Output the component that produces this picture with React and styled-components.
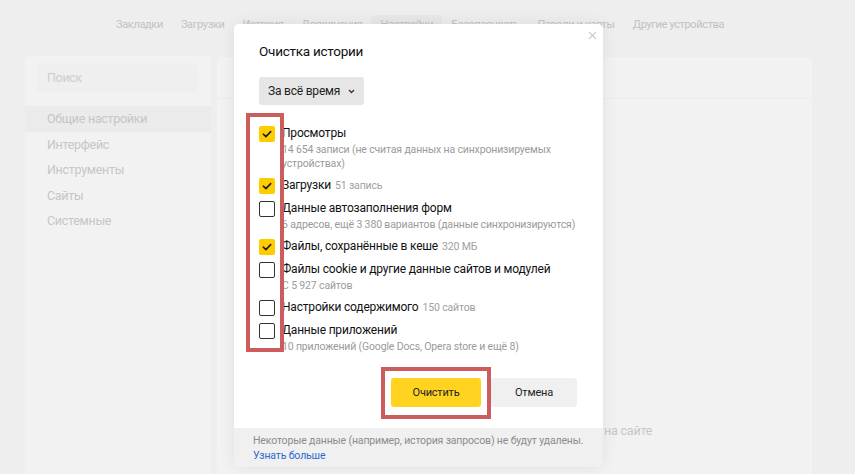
import React from "react";
import styled, { createGlobalStyle } from "styled-components";

const GlobalStyle = createGlobalStyle`
  html, body {
    margin: 0;
    padding: 0;
    width: 855px;
    height: 474px;
    overflow: hidden;
    background: #eeeeee;
    font-family: Roboto, "Open Sans", "Liberation Sans", sans-serif;
  }
  * { box-sizing: border-box; }
`;

const Page = styled.div`
  position: relative;
  width: 855px;
  height: 474px;
  overflow: hidden;
  display: flex;
  flex-direction: column;
`;

/* ---------- settings page behind the dialog ---------- */

const Nav = styled.nav`
  display: flex;
  padding: 15px 0 0 107px;
`;

const NavItem = styled.span`
  height: 20px;
  line-height: 20px;
  padding: 0 9px;
  border-radius: 4px;
  font-size: 11px;
  letter-spacing: -0.35px;
  color: #c2c2c2;
  white-space: nowrap;
  background: ${(p) => (p.$active ? "#e8e8e8" : "transparent")};
`;

const Body = styled.div`
  flex: 1;
  display: flex;
  gap: 6px;
  padding: 21px 43px 0 25px;
`;

const Sidebar = styled.aside`
  width: 186px;
  background: #f2f2f2;
  border-radius: 5px 5px 0 0;
  padding-top: 7px;
`;

const Search = styled.div`
  margin: 0 13px 0 12px;
  height: 29px;
  border-radius: 3px;
  background: #efefef;
  padding-left: 10px;
  line-height: 29px;
  font-size: 12.5px;
  letter-spacing: -0.3px;
  color: #cdcdcd;
`;

const SideList = styled.div`
  margin-top: 14px;
  display: flex;
  flex-direction: column;
`;

const SideItem = styled.div`
  height: 25.5px;
  line-height: 25.5px;
  padding-left: 22px;
  font-size: 12.5px;
  letter-spacing: -0.3px;
  color: #c6c6c6;
  background: ${(p) => (p.$active ? "#ebebeb" : "transparent")};
`;

const MainCard = styled.main`
  flex: 1;
  margin-top: 1px;
  background: #f2f2f2;
  border-radius: 5px 5px 0 0;
  display: flex;
  flex-direction: column;
`;

const MainHeader = styled.div`
  height: 42px;
  border-bottom: 1px solid #ececec;
`;

const MainRows = styled.div`
  flex: 1;
  display: flex;
  flex-direction: column;
  justify-content: flex-end;
  padding: 0 0 34px 26px;
`;

/* a setting row: control area on the left, trailing caption on the right */
const SettingLine = styled.div`
  display: grid;
  grid-template-columns: 361px auto;
  font-size: 12.5px;
  letter-spacing: -0.2px;
  line-height: 18px;
  color: #c6c6c6;
  white-space: nowrap;
`;

const SettingControl = styled.span`
  height: 18px;
`;

/* ---------- clear history dialog ---------- */

const Dialog = styled.section`
  position: absolute;
  left: 234px;
  top: 24px;
  width: 369px;
  background: #ffffff;
  border-radius: 5px;
  box-shadow: 0 0 16px rgba(0, 0, 0, 0.08);
  overflow: hidden;
  display: flex;
  flex-direction: column;
`;

const DialogBody = styled.div`
  position: relative;
  display: flex;
  flex-direction: column;
  align-items: flex-start;
  padding: 18px 26px 21px 25px;
`;

const CloseButton = styled.button`
  position: absolute;
  top: 6px;
  right: 6px;
  width: 10px;
  height: 10px;
  padding: 0;
  border: 0;
  background: none;
  display: flex;
  align-items: center;
  justify-content: center;
`;

const Title = styled.h2`
  margin: 0;
  font-size: 13.5px;
  letter-spacing: -0.25px;
  line-height: 18px;
  font-weight: 400;
  color: #111;
`;

const PeriodSelect = styled.button`
  margin-top: 17px;
  height: 28px;
  padding: 0 9px 0 9px;
  border: 0;
  border-radius: 3px;
  background: #e6e6e6;
  display: flex;
  align-items: center;
  gap: 8px;
  font-family: inherit;
  font-size: 12px;
  letter-spacing: -0.2px;
  color: #222;
`;

const Options = styled.div`
  margin-top: 20px;
  display: flex;
  flex-direction: column;
  gap: 6px;
  align-self: stretch;
`;

const Option = styled.div`
  display: flex;
  align-items: flex-start;
  gap: 7px;
`;

const Box = styled.span`
  flex: none;
  width: 16px;
  height: 16px;
  margin-top: 0.5px;
  border-radius: 2px;
  display: flex;
  align-items: center;
  justify-content: center;
  background: ${(p) => (p.$checked ? "#ffcc00" : "#ffffff")};
  border: ${(p) => (p.$checked ? "none" : "1.5px solid #333")};
`;

const OptionText = styled.div`
  display: flex;
  flex-direction: column;
`;

const Label = styled.div`
  font-size: 12px;
  letter-spacing: -0.2px;
  line-height: 17px;
  color: #111;
  white-space: nowrap;
`;

const Count = styled.span`
  margin-left: 4px;
  font-size: 10.5px;
  letter-spacing: -0.15px;
  color: #a0a0a0;
`;

const Detail = styled.div`
  padding-top: 1px;
  font-size: 10.5px;
  letter-spacing: -0.15px;
  line-height: 14px;
  color: #9a9a9a;
  white-space: nowrap;
`;

const Actions = styled.div`
  margin-top: 24px;
  align-self: stretch;
  display: flex;
  justify-content: flex-end;
  gap: 10px;
`;

const ActionButton = styled.button`
  width: ${(p) => (p.$primary ? "90px" : "86px")};
  height: 29px;
  border: 0;
  border-radius: 3px;
  background: ${(p) => (p.$primary ? "#ffd31f" : "#f0f0f0")};
  font-family: inherit;
  font-size: 11px;
  letter-spacing: -0.2px;
  color: #222;
`;

const DialogFooter = styled.footer`
  background: #f0f0f0;
  padding: 5px 8px 4px 19px;
  display: flex;
  flex-direction: column;
  font-size: 10.5px;
  letter-spacing: -0.15px;
  line-height: 15px;
  white-space: nowrap;
`;

const FooterNote = styled.span`
  color: #8c8c8c;
`;

const MoreLink = styled.a`
  color: #2a6bd1;
  text-decoration: none;
`;

/* annotation frames drawn over the dialog */
const Frame = styled.div`
  position: absolute;
  border: 4px solid #cd5c5c;
  pointer-events: none;
`;

const Check = () => (
  <svg width="12" height="12" viewBox="0 0 12 12">
    <polyline
      points="2.3,6.2 4.9,8.6 9.7,3.6"
      fill="none"
      stroke="#1e1e1e"
      strokeWidth="1.6"
      strokeLinecap="round"
      strokeLinejoin="round"
    />
  </svg>
);

const Chevron = () => (
  <svg width="7" height="5" viewBox="0 0 7 5">
    <polyline
      points="1,1 3.5,3.5 6,1"
      fill="none"
      stroke="#333"
      strokeWidth="1.3"
    />
  </svg>
);

const Cross = () => (
  <svg width="9" height="9" viewBox="0 0 9 9">
    <path d="M1 1L8 8M8 1L1 8" stroke="#cccccc" strokeWidth="1.1" />
  </svg>
);

const navItems = [
  "Закладки",
  "Загрузки",
  "История",
  "Дополнения",
  "Настройки",
  "Безопасность",
  "Пароли и карты",
  "Другие устройства",
];

const sideItems = ["Общие настройки", "Интерфейс", "Инструменты", "Сайты", "Системные"];

const options = [
  {
    label: "Просмотры",
    checked: true,
    detail: ["14 654 записи (не считая данных на синхронизируемых", "устройствах)"],
  },
  { label: "Загрузки", count: "51 запись", checked: true },
  {
    label: "Данные автозаполнения форм",
    checked: false,
    detail: ["6 адресов, ещё 3 380 вариантов (данные синхронизируются)"],
  },
  { label: "Файлы, сохранённые в кеше", count: "320 МБ", checked: true },
  {
    label: "Файлы cookie и другие данные сайтов и модулей",
    checked: false,
    detail: ["С 5 927 сайтов"],
  },
  { label: "Настройки содержимого", count: "150 сайтов", checked: false },
  {
    label: "Данные приложений",
    checked: false,
    detail: ["10 приложений (Google Docs, Opera store и ещё 8)"],
  },
];

export default function App() {
  return (
    <>
      <GlobalStyle />
      <Page>
        <Nav>
          {navItems.map((item) => (
            <NavItem key={item} $active={item === "Настройки"}>
              {item}
            </NavItem>
          ))}
        </Nav>
        <Body>
          <Sidebar>
            <Search>Поиск</Search>
            <SideList>
              {sideItems.map((item, i) => (
                <SideItem key={item} $active={i === 0}>
                  {item}
                </SideItem>
              ))}
            </SideList>
          </Sidebar>
          <MainCard>
            <MainHeader />
            <MainRows>
              <SettingLine>
                <SettingControl />
                <span>на сайте</span>
              </SettingLine>
            </MainRows>
          </MainCard>
        </Body>

        <Dialog>
          <DialogBody>
            <CloseButton aria-label="Закрыть">
              <Cross />
            </CloseButton>
            <Title>Очистка истории</Title>
            <PeriodSelect>
              За всё время
              <Chevron />
            </PeriodSelect>
            <Options>
              {options.map((o) => (
                <Option key={o.label}>
                  <Box $checked={o.checked}>{o.checked && <Check />}</Box>
                  <OptionText>
                    <Label>
                      {o.label}
                      {o.count && <Count>{o.count}</Count>}
                    </Label>
                    {o.detail && (
                      <Detail>
                        {o.detail.map((line) => (
                          <div key={line}>{line}</div>
                        ))}
                      </Detail>
                    )}
                  </OptionText>
                </Option>
              ))}
            </Options>
            <Actions>
              <ActionButton $primary>Очистить</ActionButton>
              <ActionButton>Отмена</ActionButton>
            </Actions>
          </DialogBody>
          <DialogFooter>
            <FooterNote>
              Некоторые данные (например, история запросов) не будут удалены.
            </FooterNote>
            <MoreLink href="#">Узнать больше</MoreLink>
          </DialogFooter>
        </Dialog>

        <Frame style={{ left: 246, top: 113, width: 38, height: 239 }} />
        <Frame style={{ left: 381, top: 367, width: 110, height: 52 }} />
      </Page>
    </>
  );
}
